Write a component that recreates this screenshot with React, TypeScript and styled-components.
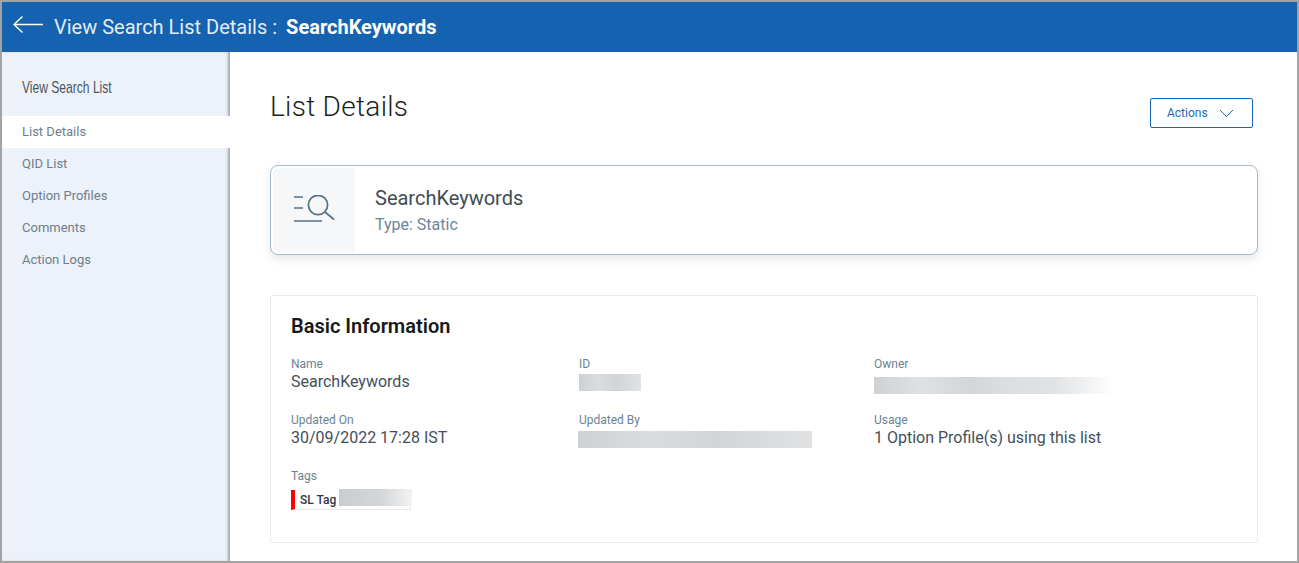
import React from 'react';
import styled, { createGlobalStyle } from 'styled-components';

const GlobalStyle = createGlobalStyle`
  html, body {
    margin: 0;
    padding: 0;
    background: #fff;
    font-family: Roboto, "Liberation Sans", sans-serif;
  }
  * {
    box-sizing: border-box;
  }
`;

const navItems = ['List Details', 'QID List', 'Option Profiles', 'Comments', 'Action Logs'];

const App = () => (
  <>
    <GlobalStyle />
    <Frame>
      <Header>
        <BackIcon width="30" height="20" viewBox="0 0 30 20" fill="none" stroke="#fff" strokeWidth="1.4">
          <path d="M30 9.5H1M9.5 1.5L1 9.5L9.5 17.5" />
        </BackIcon>
        <HeaderTitle>View Search List Details :</HeaderTitle>
        <HeaderName>SearchKeywords</HeaderName>
      </Header>
      <Body>
        <Sidebar>
          <SideTitle>View Search List</SideTitle>
          <NavList>
            {navItems.map((item, i) => (
              <NavItem key={item} $active={i === 0}>
                {item}
              </NavItem>
            ))}
          </NavList>
        </Sidebar>
        <Main>
          <TitleRow>
            <PageTitle>List Details</PageTitle>
            <ActionsButton>
              Actions
              <svg width="15" height="9" viewBox="0 0 15 9" fill="none" stroke="#1565b4" strokeWidth="1">
                <path d="M1 1L7.5 7.5L14 1" />
              </svg>
            </ActionsButton>
          </TitleRow>
          <HeroCard>
            <HeroIcon>
              <svg width="42" height="30" viewBox="0 0 42 30" fill="none" stroke="#557386" strokeWidth="1.7">
                <path d="M1 2H10M1 13H10M1 26H29" />
                <circle cx="25" cy="10" r="9.6" />
                <path d="M32 17L41 24.5" />
              </svg>
            </HeroIcon>
            <HeroText>
              <HeroName>SearchKeywords</HeroName>
              <HeroType>Type: Static</HeroType>
            </HeroText>
          </HeroCard>
          <InfoCard>
            <InfoTitle>Basic Information</InfoTitle>
            <InfoGrid>
              <Field>
                <Label>Name</Label>
                <Value>SearchKeywords</Value>
              </Field>
              <Field>
                <Label>ID</Label>
                <Redacted $width={62} />
              </Field>
              <Field>
                <Label>Owner</Label>
                <Redacted $width={240} $fade $top={6} />
              </Field>
              <Field>
                <Label>Updated On</Label>
                <Value>30/09/2022 17:28 IST</Value>
              </Field>
              <Field>
                <Label>Updated By</Label>
                <Redacted $width={234} $shift={-1} $top={4} />
              </Field>
              <Field>
                <Label>Usage</Label>
                <Value>1 Option Profile(s) using this list</Value>
              </Field>
              <Field>
                <Label>Tags</Label>
                <Tag>
                  SL Tag
                  <TagBlur />
                </Tag>
              </Field>
            </InfoGrid>
          </InfoCard>
        </Main>
      </Body>
    </Frame>
  </>
);

const Frame = styled.div`
  display: flex;
  flex-direction: column;
  width: 1299px;
  height: 563px;
  overflow: hidden;
  border: 2px solid #a3a3a3;
  background: #fff;
`;

const Header = styled.header`
  display: flex;
  align-items: center;
  flex: none;
  height: 50px;
  padding-left: 11px;
  background: #1462b0;
  color: #fff;
`;

const BackIcon = styled.svg`
  flex: none;
  margin: -5px 11px 0 0;
`;

const HeaderTitle = styled.span`
  font-size: 20px;
  color: #e3edf7;
`;

const HeaderName = styled.span`
  margin-left: 9px;
  font-size: 20px;
  font-weight: 700;
`;

const Body = styled.div`
  display: flex;
  flex: 1;
  min-height: 0;
`;

const Sidebar = styled.aside`
  flex: none;
  width: 228px;
  padding-top: 26px;
  background: #edf2fa;
  box-shadow: inset -3px 0 3px -1px rgba(60, 70, 80, 0.45);
`;

const SideTitle = styled.div`
  height: 38px;
  padding-left: 20px;
  font-family: "Liberation Sans", sans-serif;
  font-size: 17px;
  line-height: 20px;
  color: #47565f;
  transform: scaleX(0.71);
  transform-origin: 20px 0;
  white-space: nowrap;
`;

const NavList = styled.nav`
  display: flex;
  flex-direction: column;
`;

const NavItem = styled.a<{ $active?: boolean }>`
  height: 32px;
  padding-left: 20px;
  font-size: 13px;
  line-height: 32px;
  color: #6b7f8c;
  background: ${(p) => (p.$active ? '#fff' : 'transparent')};
`;

const Main = styled.main`
  flex: 1;
  min-width: 0;
  padding: 0 39px 0 40px;
`;

const TitleRow = styled.div`
  display: flex;
  align-items: flex-start;
  justify-content: space-between;
  height: 113px;
  padding: 37px 5px 0 0;
`;

const PageTitle = styled.h1`
  margin: 0;
  font-size: 28px;
  font-weight: 300;
  line-height: 36px;
  letter-spacing: 0.3px;
  color: #1a1f23;
`;

const ActionsButton = styled.button`
  display: flex;
  align-items: center;
  gap: 11px;
  width: 103px;
  height: 30px;
  margin-top: 9px;
  padding: 0 0 0 16px;
  border: 1px solid #1565b4;
  border-radius: 2px;
  background: #fff;
  font-family: Roboto, sans-serif;
  font-size: 12px;
  color: #1a6ab8;
`;

const HeroCard = styled.section`
  display: flex;
  height: 90px;
  padding: 2px;
  border: 1px solid #a9bac7;
  border-radius: 8px;
  background: #fff;
  box-shadow: 0 4px 10px rgba(60, 80, 100, 0.14);
`;

const HeroIcon = styled.div`
  display: flex;
  align-items: center;
  justify-content: center;
  flex: none;
  width: 82px;
  background: #f5f7f9;
  border-radius: 6px 0 0 6px;
`;

const HeroText = styled.div`
  display: flex;
  flex-direction: column;
  justify-content: center;
  padding: 1px 0 0 20px;
`;

const HeroName = styled.div`
  font-size: 20px;
  line-height: 27px;
  color: #3f4c55;
`;

const HeroType = styled.div`
  margin-top: 1px;
  font-size: 16px;
  line-height: 24px;
  color: #6b8799;
`;

const InfoCard = styled.section`
  height: 248px;
  margin-top: 40px;
  padding: 18px 20px 0;
  border: 1px solid #e6ebef;
  border-radius: 3px;
`;

const InfoTitle = styled.h2`
  margin: 0 0 19px;
  font-size: 20px;
  font-weight: 600;
  line-height: 24px;
  color: #16191c;
`;

const InfoGrid = styled.div`
  display: grid;
  grid-template-columns: 288px 295px 1fr;
  grid-auto-rows: 56px;
`;

const Field = styled.div`
  display: flex;
  flex-direction: column;
`;

const Label = styled.div`
  font-size: 12px;
  line-height: 14px;
  color: #6b8394;
`;

const Value = styled.div`
  margin-top: 1px;
  font-size: 16px;
  line-height: 20px;
  color: #444f57;
`;

const Redacted = styled.div<{ $width: number; $fade?: boolean; $shift?: number; $top?: number }>`
  width: ${(p) => p.$width}px;
  height: 17px;
  margin-top: ${(p) => p.$top ?? 3}px;
  margin-left: ${(p) => p.$shift ?? 0}px;
  background: ${(p) =>
    p.$fade
      ? 'linear-gradient(90deg, #cfd2d5 0%, #dfe1e3 20%, #d3d6d8 40%, #dcdfe1 55%, #e0e2e4 75%, #ffffff 100%)'
      : 'linear-gradient(90deg, #ced1d4 0%, #dadcde 30%, #d2d5d7 60%, #e0e2e3 100%)'};
`;

const Tag = styled.div`
  position: relative;
  display: flex;
  align-items: center;
  width: 120px;
  height: 20px;
  margin-top: 7px;
  padding: 1px 0 0 5px;
  border-left: 4px solid #ff0000;
  border-bottom: 1px solid #e6e9ec;
  border-right: 1px solid #e6e9ec;
  font-size: 12px;
  font-weight: 500;
  color: #30383e;
`;

const TagBlur = styled.span`
  position: absolute;
  top: -1px;
  left: 44px;
  width: 73px;
  height: 17px;
  background: linear-gradient(90deg, #c9cdd0 0%, #d5d7d9 60%, #f2f3f3 100%);
`;

export default App;
